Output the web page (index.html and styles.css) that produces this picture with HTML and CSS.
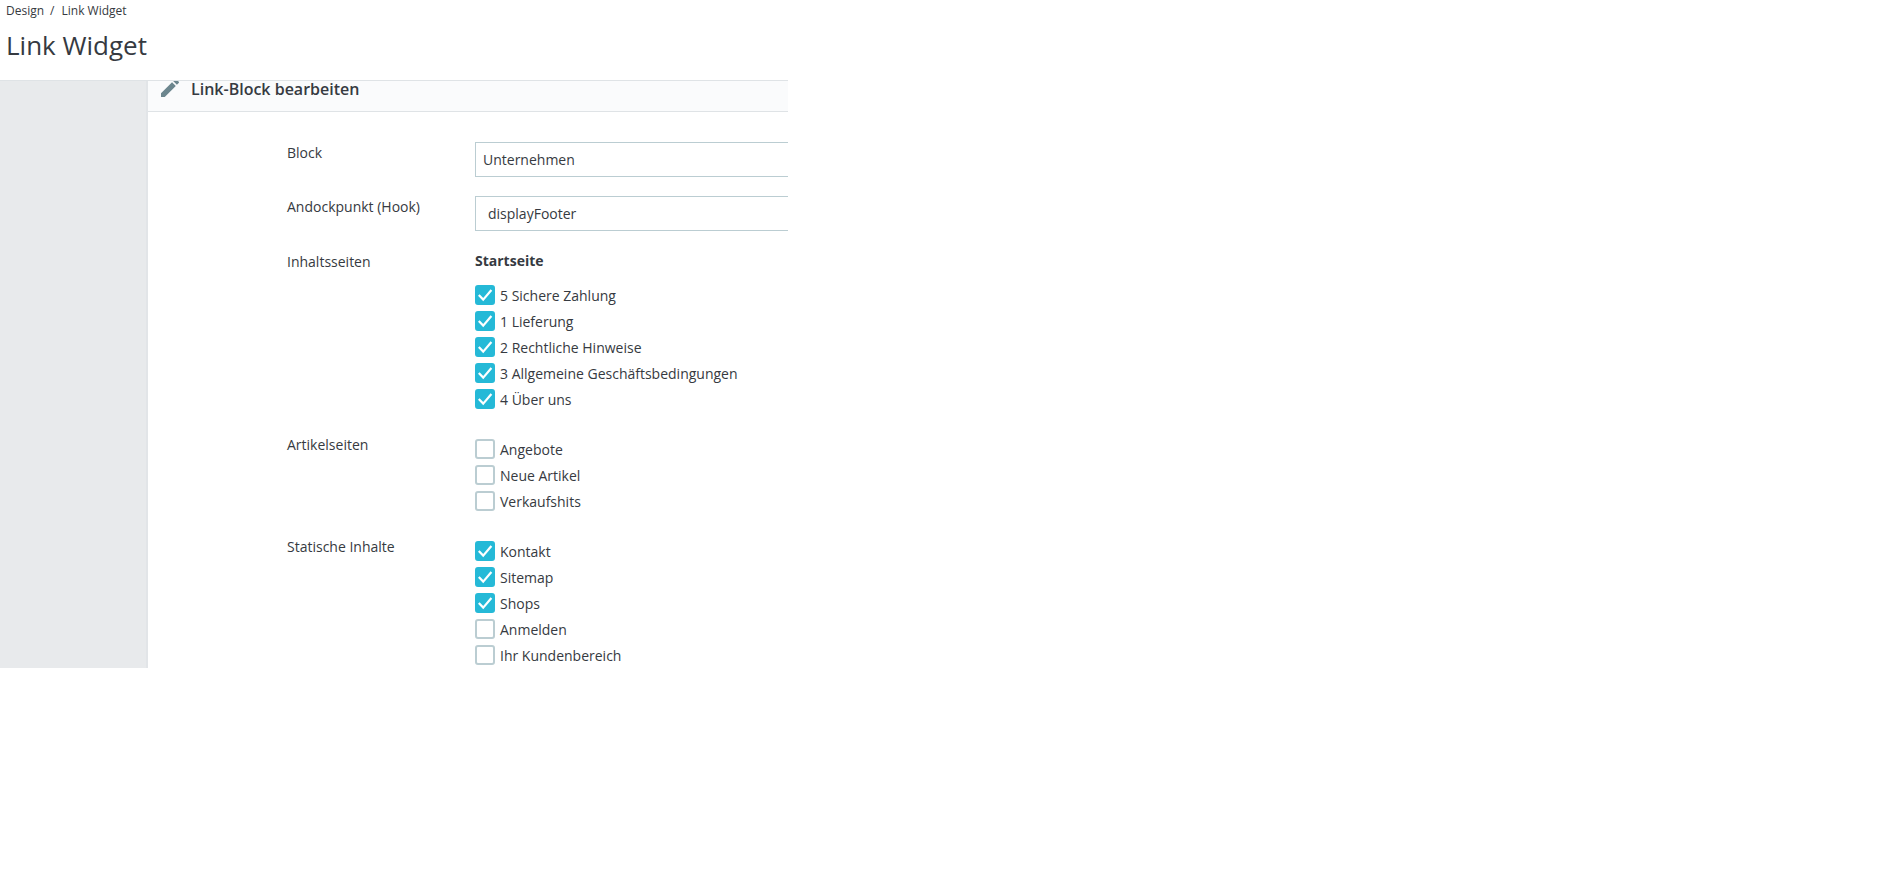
FILE: index.html
```html
<!DOCTYPE html>
<html lang="de">
<head>
<meta charset="utf-8">
<title>Link Widget</title>
<link rel="stylesheet" href="styles.css">
</head>
<body>
<div class="app">
  <header class="page-head">
    <nav class="crumbs"><span>Design</span><span class="sep">/</span><span>Link Widget</span></nav>
    <h1 class="title">Link Widget</h1>
  </header>
  <div class="main">
    <aside class="side"></aside>
    <section class="panel">
      <div class="panel-head">
        <svg class="pencil" viewBox="0 0 24 24" width="24" height="24"><path d="M3 17.25V21h3.75L17.81 9.94l-3.75-3.75L3 17.25zM20.71 7.04a1 1 0 0 0 0-1.41l-2.34-2.34a1 1 0 0 0-1.41 0l-1.83 1.83 3.75 3.75 1.83-1.83z"/></svg>
        <h2 class="panel-title">Link-Block bearbeiten</h2>
      </div>
      <form class="form">
        <div class="row row-input">
          <div class="label">Block</div>
          <div class="field"><div class="input">Unternehmen</div></div>
        </div>
        <div class="row row-input">
          <div class="label">Andockpunkt (Hook)</div>
          <div class="field"><div class="input input-select">displayFooter</div></div>
        </div>
        <div class="row row-pages row-titled">
          <div class="label">Inhaltsseiten</div>
          <div class="field">
            <div class="group-title">Startseite</div>
            <div class="check"><span class="box on"><svg viewBox="0 0 20 20"><path d="M3.8 10l4.4 4.6 8.2-9.6"/></svg></span>5 Sichere Zahlung</div>
            <div class="check"><span class="box on"><svg viewBox="0 0 20 20"><path d="M3.8 10l4.4 4.6 8.2-9.6"/></svg></span>1 Lieferung</div>
            <div class="check"><span class="box on"><svg viewBox="0 0 20 20"><path d="M3.8 10l4.4 4.6 8.2-9.6"/></svg></span>2 Rechtliche Hinweise</div>
            <div class="check"><span class="box on"><svg viewBox="0 0 20 20"><path d="M3.8 10l4.4 4.6 8.2-9.6"/></svg></span>3 Allgemeine Geschäftsbedingungen</div>
            <div class="check"><span class="box on"><svg viewBox="0 0 20 20"><path d="M3.8 10l4.4 4.6 8.2-9.6"/></svg></span>4 Über uns</div>
          </div>
        </div>
        <div class="row row-pages">
          <div class="label">Artikelseiten</div>
          <div class="field field-list">
            <div class="check"><span class="box"></span>Angebote</div>
            <div class="check"><span class="box"></span>Neue Artikel</div>
            <div class="check"><span class="box"></span>Verkaufshits</div>
          </div>
        </div>
        <div class="row row-pages">
          <div class="label">Statische Inhalte</div>
          <div class="field field-list">
            <div class="check"><span class="box on"><svg viewBox="0 0 20 20"><path d="M3.8 10l4.4 4.6 8.2-9.6"/></svg></span>Kontakt</div>
            <div class="check"><span class="box on"><svg viewBox="0 0 20 20"><path d="M3.8 10l4.4 4.6 8.2-9.6"/></svg></span>Sitemap</div>
            <div class="check"><span class="box on"><svg viewBox="0 0 20 20"><path d="M3.8 10l4.4 4.6 8.2-9.6"/></svg></span>Shops</div>
            <div class="check"><span class="box"></span>Anmelden</div>
            <div class="check"><span class="box"></span>Ihr Kundenbereich</div>
          </div>
        </div>
      </form>
    </section>
  </div>
</div>
</body>
</html>
```
FILE: styles.css
```css
* { box-sizing: border-box; }
html, body { margin: 0; background: #fff; }
body {
  font-family: "Open Sans", sans-serif;
  font-size: 14px;
  color: #363a41;
  height: 895px;
  overflow: hidden;
}
.app { width: 788px; height: 668px; overflow: hidden; }
.page-head {
  height: 81px;
  padding: 3px 6px 0;
  border-bottom: 1px solid #dfe3e6;
}
.crumbs { display: flex; gap: 6px; font-size: 12px; line-height: 14px; padding-top: 1px; }
.crumbs .sep { margin-right: 1px; }
.title { margin: 10px 0 0; font-size: 26px; font-weight: 400; line-height: 34px; }
.main { display: flex; height: 587px; overflow: hidden; }
.side { width: 148px; flex: none; background: #e8eaec; border-right: 2px solid #e2e5e8; }
.panel { flex: 1; min-width: 0; }
.panel-head {
  display: flex;
  align-items: center;
  height: 41px;
  margin-top: -10px;
  padding: 0 0 4px 10px;
  gap: 9px;
  background: #fafbfc;
  border-bottom: 1px solid #dfe3e6;
}
.pencil { fill: #6c868e; flex: none; margin-top: -2px; }
.panel-title { margin: 0; font-size: 16px; font-weight: 600; line-height: 16px; }
.form { padding: 30px 0 0 139px; }
.row { display: flex; }
.row-input { margin-bottom: 19px; }
.row-pages { margin-bottom: 19px; }
.row-titled { margin-top: 20px; }
.label { width: 188px; flex: none; padding-top: 1px; line-height: 20px; }
.field { flex: 1; min-width: 0; }
.field-list { padding-top: 5px; }
.input {
  width: 600px;
  height: 35px;
  border: 1px solid #bbcdd2;
  padding: 0 7px;
  line-height: 33px;
  color: #363a41;
}
.input-select { padding-left: 12px; }
.group-title { font-weight: 700; line-height: 20px; margin-bottom: 14px; }
.check { display: flex; align-items: center; height: 20px; margin-bottom: 6px; }
.box {
  width: 20px;
  height: 20px;
  flex: none;
  margin-right: 5px;
  border: 2px solid #bbcdd2;
  border-radius: 3px;
}
.box.on { background: #25b9d7; border-color: #25b9d7; }
.box svg { display: block; width: 20px; height: 20px; margin: -2px; fill: none; stroke: #fff; stroke-width: 2.2; }
```
